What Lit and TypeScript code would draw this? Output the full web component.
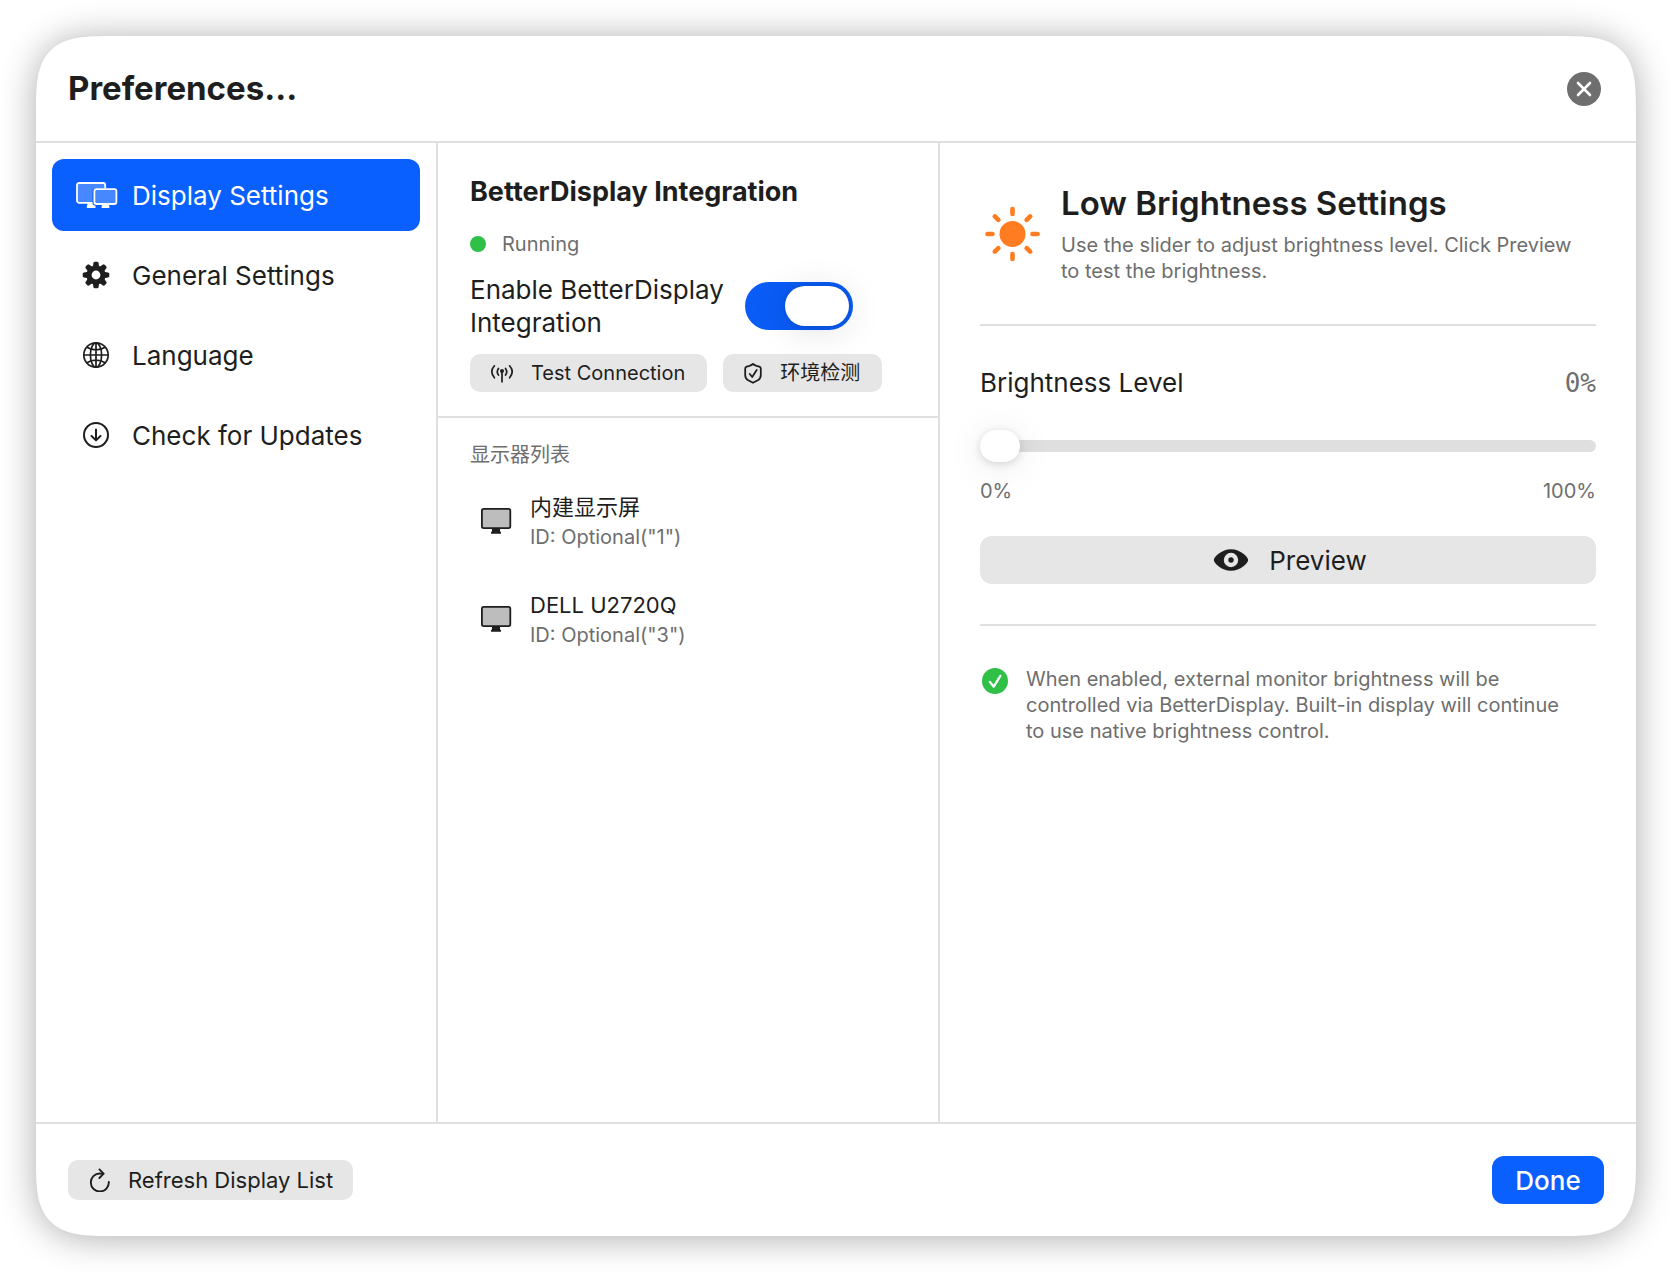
import { LitElement, html, css, svg, nothing } from "lit";
import { customElement, property, state } from "lit/decorators.js";
import { classMap } from "lit/directives/class-map.js";

const GLYPHS = {
  displays: {
    box: "0 0 44 30",
    art: svg`
      <path d="M12.800 26.500l1-3.500h6.600l1.200 3.500q.3 1.500-1 1.500h-7q-1.300 0-.8-1.500z" fill="currentColor" />
      <rect x="3" y="3" width="28.200" height="19.800" rx="2" fill="#4787ff" stroke="currentColor" stroke-width="1.800" />
      <rect x="18.500" y="8.200" width="25.500" height="17.600" rx="3" fill="#0a60ff" />
      <path d="M27.500 27l.9-3h6.200l.9 3q.3 1-.8 1h-6.400q-1.100 0-.8-1z" fill="currentColor" />
      <rect x="20.400" y="9.200" width="22" height="14.800" rx="2" fill="#4787ff" stroke="currentColor" stroke-width="1.800" />`,
  },
  gear: {
    box: "0 0 28 28",
    art: svg`
      <g fill="currentColor">
        ${[0, 45, 90, 135, 180, 225, 270, 315].map(
          (a) => svg`<path transform="rotate(${a} 14 14)" d="M10.800 6l.6-4q.2-1.300 1.500-1.300h2.200q1.300 0 1.500 1.300l.6 4z" />`
        )}
      </g>
      <circle cx="14" cy="14" r="7" fill="none" stroke="currentColor" stroke-width="5.200" />`,
  },
  globe: {
    box: "0 0 28 28",
    art: svg`
      <g fill="none" stroke="currentColor" stroke-width="1.700">
        <circle cx="14" cy="14" r="12.200" />
        <ellipse cx="14" cy="14" rx="5.600" ry="12.200" />
        <path d="M14 1.800v24.400M1.800 14h24.400M4.900 6.200q3.900 2.600 9.100 2.600t9.100-2.600M4.900 21.800q3.900-2.600 9.100-2.600t9.100 2.600" />
      </g>`,
  },
  download: {
    box: "0 0 28 28",
    art: svg`
      <g fill="none" stroke="currentColor" stroke-width="2" stroke-linecap="round" stroke-linejoin="round">
        <circle cx="14" cy="14" r="12" />
        <path d="M14 8.500v10.600M9.500 15l4.500 4.400 4.500-4.400" />
      </g>`,
  },
  antenna: {
    box: "0 0 24 24",
    art: svg`
      <g fill="none" stroke="currentColor" stroke-width="1.700" stroke-linecap="round">
        <path d="M12 10v10.800M8.500 7.400q-2.500 3.300 0 6.600M15.500 7.400q2.500 3.300 0 6.600M4.400 4.800q-5.200 6 0 12M19.600 4.800q5.200 6 0 12" />
      </g>
      <circle cx="12" cy="10" r="2" fill="currentColor" />`,
  },
  shield: {
    box: "0 0 20 24",
    art: svg`
      <g fill="none" stroke="currentColor" stroke-width="1.800" stroke-linecap="round" stroke-linejoin="round">
        <path d="M10 3q1 1 3.500 1.800l2.800.8q1.500.4 1.500 2v6.600q0 3.200-3 5.100L10 21.800l-4.800-2.500q-3-1.900-3-5.100V7.600q0-1.600 1.500-2l2.800-.8Q9 4 10 3z" />
        <path d="M6.800 13l2.400 3 4.500-7" />
      </g>`,
  },
  monitor: {
    box: "0 0 36 30",
    art: svg`
      <path d="M14 23h8v2.800h1v2H13v-2h1z" fill="currentColor" />
      <rect x="3.900" y="2.900" width="28.400" height="19.200" rx="1.800" fill="#bdbdbd" stroke="currentColor" stroke-width="1.800" />`,
  },
  eye: {
    box: "0 0 36 24",
    art: svg`
      <path fill-rule="evenodd" fill="currentColor" d="M18 1.200C8.500 1.200.8 9 .8 12S8.500 22.800 18 22.800 35.200 15 35.200 12 27.500 1.200 18 1.200zM18 4.800a7.200 7.200 0 1 1 0 14.400 7.200 7.200 0 0 1 0-14.400z" />
      <circle cx="18" cy="12" r="2.700" fill="currentColor" />`,
  },
  refresh: {
    box: "0 0 24 24",
    art: svg`
      <g fill="none" stroke="currentColor" stroke-width="1.900" stroke-linecap="round" stroke-linejoin="round">
        <path d="M20.800 14a9 9 0 1 1-9-8.500q1.600 0 3.600.4" />
        <path d="M11.400 1.400l4.200 4.300-4.200 4.300" />
      </g>`,
  },
  close: {
    box: "0 0 36 36",
    art: svg`
      <circle cx="18" cy="18" r="17" fill="#6e6e6e" />
      <path d="M12 12l12 12M24 12L12 24" stroke="#fff" stroke-width="2.600" stroke-linecap="round" />`,
  },
  check: {
    box: "0 0 30 30",
    art: svg`
      <circle cx="15" cy="15" r="13" fill="#30c048" />
      <path d="M9.800 15.800l3.900 4.900 6.700-10.900" fill="none" stroke="#fff" stroke-width="2.200" stroke-linecap="round" stroke-linejoin="round" />`,
  },
  sun: {
    box: "0 0 64 56",
    art: svg`
      <circle cx="32.500" cy="28" r="13" fill="currentColor" />
      ${[0, 45, 90, 135, 180, 225, 270, 315].map(
        (a) => svg`<path transform="rotate(${a} 32.500 28)" d="M32.500 3v5" stroke="currentColor" stroke-width="4.600" stroke-linecap="round" />`
      )}`,
  },
};

type GlyphName = keyof typeof GLYPHS;

@customElement("ui-glyph")
class UiGlyph extends LitElement {
  @property() name: GlyphName = "gear";

  static styles = css`
    :host {
      display: block;
      flex: none;
    }
    .art {
      display: block;
    }
  `;

  render() {
    const { box, art } = GLYPHS[this.name];
    const [, , w, h] = box.split(" ");
    return html`<svg class="art" width=${w} height=${h} viewBox=${box} aria-hidden="true">${art}</svg>`;
  }
}

const NAV: { icon: GlyphName; label: string }[] = [
  { icon: "displays", label: "Display Settings" },
  { icon: "gear", label: "General Settings" },
  { icon: "globe", label: "Language" },
  { icon: "download", label: "Check for Updates" },
];

const DISPLAYS = [
  { name: "内建显示屏", id: 'ID: Optional("1")' },
  { name: "DELL U2720Q", id: 'ID: Optional("3")' },
];

@customElement("app-root")
class AppRoot extends LitElement {
  @state() private section = 0;
  @state() private enabled = true;
  @state() private level = 0;

  static styles = css`
    :host {
      --ink: #1e1e1e;
      --muted: #6e6e6e;
      --line: #dfdfdf;
      --fill: #e6e6e6;
      --blue: #0a60ff;
      display: flex;
      box-sizing: border-box;
      min-height: 100vh;
      padding: 36px;
      background: #fff;
      color: var(--ink);
      font: 400 26px/33px Inter, "Noto Sans CJK SC", sans-serif;
    }
    * {
      box-sizing: border-box;
    }
    h1, h2, h3, p, ul {
      margin: 0;
      padding: 0;
    }
    button {
      display: flex;
      align-items: center;
      border: 0;
      margin: 0;
      color: inherit;
      font: inherit;
      background: none;
      cursor: pointer;
      white-space: nowrap;
    }
    .window {
      flex: 1;
      display: flex;
      flex-direction: column;
      min-width: 0;
      overflow: hidden;
      background: #fff;
      border-radius: 78px;
      corner-shape: superellipse(1.75);
      box-shadow: 0 2px 36px rgba(0, 0, 0, 0.33);
    }
    .header {
      display: flex;
      align-items: center;
      justify-content: space-between;
      height: 107px;
      padding: 0 32px;
      border-bottom: 2px solid var(--line);
    }
    .title {
      font-size: 33px;
      line-height: 41px;
      font-weight: 700;
    }
    .close {
      padding: 2px;
    }
    .body {
      flex: 1;
      display: grid;
      grid-template-columns: 402px 502px minmax(0, 1fr);
    }
    .nav {
      display: flex;
      flex-direction: column;
      gap: 8px;
      padding: 16px;
      border-right: 2px solid var(--line);
    }
    .nav-item {
      gap: 12px;
      width: 100%;
      height: 72px;
      padding: 0 20px;
      border-radius: 12px;
    }
    .nav-item.active {
      background: var(--blue);
      color: #fff;
    }
    .nav-icon {
      display: flex;
      justify-content: center;
      flex: none;
      width: 48px;
    }
    .middle {
      border-right: 2px solid var(--line);
    }
    .integration {
      padding: 32px 32px 24px;
      border-bottom: 2px solid var(--line);
    }
    .heading {
      margin-bottom: 22px;
      font-size: 27px;
      line-height: 34px;
      font-weight: 700;
    }
    .caption {
      color: var(--muted);
      font-size: 20px;
      line-height: 26px;
      font-weight: 400;
    }
    .status {
      display: flex;
      align-items: center;
      gap: 16px;
      margin-bottom: 16px;
    }
    .dot {
      width: 16px;
      height: 16px;
      border-radius: 50%;
      background: #30c048;
    }
    .enable {
      display: flex;
      align-items: center;
      gap: 20px;
      margin-bottom: 15px;
    }
    .enable-label {
      width: 255px;
    }
    .switch {
      appearance: none;
      display: flex;
      align-items: center;
      width: 108px;
      height: 48px;
      margin: 0;
      padding: 4px;
      border-radius: 24px;
      background: #c8c8c8;
      cursor: pointer;
    }
    .switch::before {
      content: "";
      width: 64px;
      height: 40px;
      border-radius: 20px;
      background: #fff;
      box-shadow: 0 4px 36px rgba(0, 0, 0, 0.12), 0 0 6px rgba(0, 0, 0, 0.12);
    }
    .switch:checked {
      justify-content: flex-end;
      background: #0a5cf6;
    }
    .actions {
      display: flex;
      gap: 16px;
    }
    .small {
      gap: 17px;
      height: 38px;
      padding: 0 20px;
      border-radius: 10px;
      background: var(--fill);
      font-size: 20px;
      padding-right: 22px;
    }
    .displays {
      padding: 24px 32px;
    }
    .list {
      display: flex;
      flex-direction: column;
      gap: 8px;
      margin-top: 8px;
      list-style: none;
    }
    .display {
      display: flex;
      align-items: center;
      gap: 16px;
      padding: 16px 8px;
    }
    .display-text {
      display: flex;
      flex-direction: column;
      gap: 2px;
    }
    .display-name {
      font-size: 22px;
      line-height: 30px;
    }
    .detail {
      display: flex;
      flex-direction: column;
      gap: 40px;
      padding: 40px;
    }
    .intro {
      display: flex;
      align-items: center;
      gap: 17px;
      padding-bottom: 40px;
      border-bottom: 2px solid var(--line);
    }
    .sun {
      color: #ff7c20;
    }
    .intro-text {
      display: flex;
      flex-direction: column;
      gap: 8px;
      padding-right: 16px;
    }
    .intro-title {
      font-size: 33px;
      line-height: 41px;
      font-weight: 600;
    }
    .brightness {
      display: flex;
      flex-direction: column;
      padding-bottom: 40px;
      border-bottom: 2px solid var(--line);
    }
    .row {
      display: flex;
      justify-content: space-between;
    }
    .level-row {
      line-height: 34px;
      margin-bottom: 30px;
    }
    .value {
      color: var(--muted);
      font-family: "DejaVu Sans Mono", monospace;
    }
    .slider {
      appearance: none;
      display: block;
      width: 100%;
      height: 32px;
      margin: 0 0 16px;
      background: none;
      cursor: pointer;
    }
    .slider::-webkit-slider-runnable-track {
      height: 12px;
      border-radius: 6px;
      background: var(--line);
    }
    .slider::-webkit-slider-thumb {
      appearance: none;
      width: 40px;
      height: 32px;
      margin-top: -10px;
      border-radius: 16px;
      background: #fff;
      box-shadow: 0 4px 36px rgba(0, 0, 0, 0.1), 0 2px 8px rgba(0, 0, 0, 0.14);
    }
    .preview {
      justify-content: center;
      gap: 20px;
      height: 48px;
      margin-top: 32px;
      padding: 0 6px 0 10px;
      border-radius: 12px;
      background: var(--fill);
    }
    .note {
      display: flex;
      align-items: flex-start;
      gap: 16px;
      padding-right: 20px;
    }
    .footer {
      display: flex;
      align-items: center;
      justify-content: space-between;
      height: 114px;
      padding: 0 32px;
      border-top: 2px solid var(--line);
    }
    .refresh {
      gap: 16px;
      height: 40px;
      padding: 0 20px;
      border-radius: 10px;
      background: var(--fill);
      font-size: 22px;
    }
    .done {
      justify-content: center;
      min-width: 112px;
      height: 48px;
      padding: 0 20px;
      border-radius: 12px;
      background: var(--blue);
      color: #fff;
      font-weight: 500;
    }
  `;

  render() {
    return html`
      <main class="window">
        <header class="header">
          <h1 class="title">Preferences...</h1>
          <button class="close" aria-label="Close"><ui-glyph name="close"></ui-glyph></button>
        </header>
        <div class="body">
          <nav class="nav">
            ${NAV.map(
              (item, i) => html`
                <button
                  class=${classMap({ "nav-item": true, active: i === this.section })}
                  aria-current=${i === this.section ? "page" : nothing}
                  @click=${() => (this.section = i)}
                >
                  <span class="nav-icon"><ui-glyph name=${item.icon}></ui-glyph></span>
                  ${item.label}
                </button>
              `
            )}
          </nav>
          <div class="middle">
            <section class="integration">
              <h2 class="heading">BetterDisplay Integration</h2>
              <p class="status caption"><span class="dot"></span>Running</p>
              <div class="enable">
                <label class="enable-label" for="enable">Enable BetterDisplay Integration</label>
                <input
                  class="switch"
                  id="enable"
                  type="checkbox"
                  role="switch"
                  .checked=${this.enabled}
                  @change=${(e: Event) => (this.enabled = (e.target as HTMLInputElement).checked)}
                />
              </div>
              <div class="actions">
                <button class="small"><ui-glyph name="antenna"></ui-glyph>Test Connection</button>
                <button class="small"><ui-glyph name="shield"></ui-glyph>环境检测</button>
              </div>
            </section>
            <section class="displays">
              <h3 class="caption">显示器列表</h3>
              <ul class="list">
                ${DISPLAYS.map(
                  (d) => html`
                    <li class="display">
                      <ui-glyph name="monitor"></ui-glyph>
                      <div class="display-text">
                        <span class="display-name">${d.name}</span>
                        <span class="caption">${d.id}</span>
                      </div>
                    </li>
                  `
                )}
              </ul>
            </section>
          </div>
          <section class="detail">
            <div class="intro">
              <ui-glyph class="sun" name="sun"></ui-glyph>
              <div class="intro-text">
                <h2 class="intro-title">Low Brightness Settings</h2>
                <p class="caption">
                  Use the slider to adjust brightness level. Click Preview to test the brightness.
                </p>
              </div>
            </div>
            <div class="brightness">
              <div class="row level-row">
                <label for="level">Brightness Level</label>
                <output class="value" for="level">${this.level}%</output>
              </div>
              <input
                class="slider"
                id="level"
                type="range"
                min="0"
                max="100"
                .value=${String(this.level)}
                @input=${(e: Event) => (this.level = Number((e.target as HTMLInputElement).value))}
              />
              <div class="row caption"><span>0%</span><span>100%</span></div>
              <button class="preview"><ui-glyph name="eye"></ui-glyph>Preview</button>
            </div>
            <div class="note">
              <ui-glyph name="check"></ui-glyph>
              <p class="caption">
                When enabled, external monitor brightness will be controlled via BetterDisplay. Built-in display
                will continue to use native brightness control.
              </p>
            </div>
          </section>
        </div>
        <footer class="footer">
          <button class="refresh"><ui-glyph name="refresh"></ui-glyph>Refresh Display List</button>
          <button class="done">Done</button>
        </footer>
      </main>
    `;
  }
}
